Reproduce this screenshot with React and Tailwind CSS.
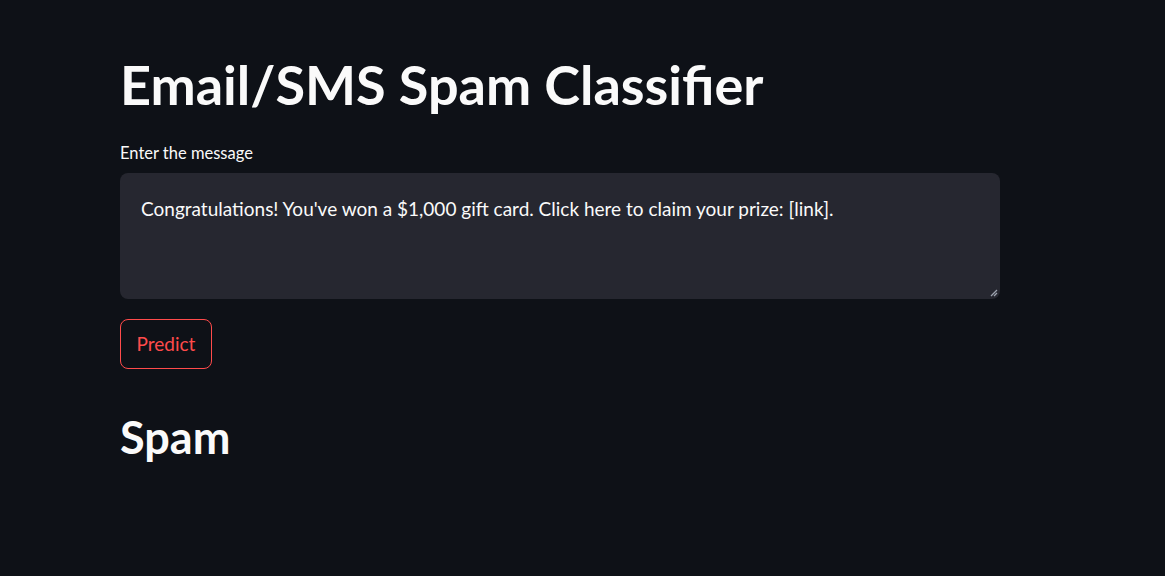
export default function App() {
    return (
        <div className="min-h-[576px] w-full bg-[#0e1117] text-[#fafafa]" style={{ fontFamily: 'Lato, "Noto Sans", sans-serif' }}>
            <div className="ml-[120px] w-[880px] pt-[50px]">
                <h1 className="text-[54px] leading-[70px] font-bold">Email/SMS Spam Classifier</h1>
                <div className="mt-[23px] text-[16.5px] leading-[20px]">Enter the message</div>
                <div className="relative mt-[10px] h-[126px] rounded-lg bg-[#262730] px-[21px] pt-[22px] text-[19px] leading-[28px]">
                    Congratulations! You've won a $1,000 gift card. Click here to claim your prize: [link].
                    <svg className="absolute bottom-[2px] right-[2px]" width="8" height="8" viewBox="0 0 8 8">
                        <path d="M7 1L1 7M7 4L4 7" stroke="#9ca3af" strokeWidth="1.3" />
                    </svg>
                </div>
                <button className="mt-[20px] h-[50px] w-[92px] rounded-lg border border-[#ff4b4b] text-[19px] text-[#ff4b4b]">Predict</button>
                <h2 className="mt-[40px] text-[45px] leading-[56px] font-bold">Spam</h2>
            </div>
        </div>
    );
}
